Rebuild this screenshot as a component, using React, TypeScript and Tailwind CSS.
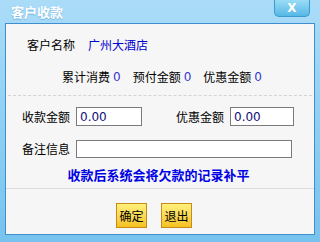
import React from 'react'

const Btn = ({ label }: { label: string }) => (
  <button className="w-[31px] h-[25px] border border-[#c98a1c] bg-gradient-to-b from-[#fff07a] to-[#f4c21c] text-[12px] text-black leading-none">
    {label}
  </button>
)

const Num = () => <span className="text-[#3535cc] font-['DejaVu_Sans',sans-serif] text-[12px] ml-[3px]">0</span>

const App = () => {
  return (
    <div className="w-[320px] h-[242px] flex flex-col bg-gradient-to-b from-[#aadcf8] via-[#8fd0f4] to-[#76c3ee] font-['Noto_Sans_CJK_SC',sans-serif]">
      <div className="h-[23px] flex items-start justify-between shrink-0">
        <div className="pl-[11px] pt-[3px] text-[13px] font-bold text-white leading-[17px] [text-shadow:0_1px_1px_rgba(50,130,190,0.45)]">
          客户收款
        </div>
        <div className="mr-[10px] w-[36px] h-[17px] rounded-b-[5px] border border-t-0 border-[#3d9ad0] bg-gradient-to-b from-[#9adcf6] to-[#55b7e6] flex items-center justify-center text-white text-[12px] font-bold font-['DejaVu_Sans',sans-serif] leading-none">
          X
        </div>
      </div>
      <div className="mx-[5px] mb-[7px] flex-1 border border-[#3f8fd0] bg-[#f6f6f6] flex flex-col text-[12px] text-black">
        <div className="mt-[13px] h-[16px] pl-[21px] flex items-center leading-[16px]">
          <span>客户名称</span>
          <span className="ml-[13px] text-[#0000cc]">广州大酒店</span>
        </div>
        <div className="mt-[16px] h-[16px] pl-[56px] flex items-center leading-[16px]">
          <span>累计消费</span>
          <Num />
          <span className="ml-[12px]">预付金额</span>
          <Num />
          <span className="ml-[12px]">优惠金额</span>
          <Num />
        </div>
        <div className="mt-[10px] mx-[2px] border-t border-dashed border-[#d4d4d4]" />
        <div className="mt-[11px] h-[19px] pl-[16px] flex items-center">
          <span className="w-[54px]">收款金额</span>
          <div className="w-[66px] h-[19px] border border-[#7b7b7b] bg-white flex items-center pl-[3px] text-[#10107a] font-['DejaVu_Sans',sans-serif] text-[12px]">0.00</div>
          <span className="ml-[34px] w-[54px]">优惠金额</span>
          <div className="w-[64px] h-[19px] border border-[#7b7b7b] bg-white flex items-center pl-[3px] text-[#10107a] font-['DejaVu_Sans',sans-serif] text-[12px]">0.00</div>
        </div>
        <div className="mt-[14px] h-[18px] pl-[16px] flex items-center">
          <span className="w-[54px]">备注信息</span>
          <div className="w-[216px] h-[18px] border border-[#7b7b7b] bg-white" />
        </div>
        <div className="mt-[9px] h-[16px] text-center text-[13px] font-bold text-[#0000e6] leading-[16px] pr-[3px]">
          收款后系统会将欠款的记录补平
        </div>
        <div className="mt-[5px] border-t border-[#dcdcdc]" />
        <div className="mt-[14px] pl-[110px] flex gap-[14px]">
          <Btn label="确定" />
          <Btn label="退出" />
        </div>
      </div>
    </div>
  )
}

export default App
